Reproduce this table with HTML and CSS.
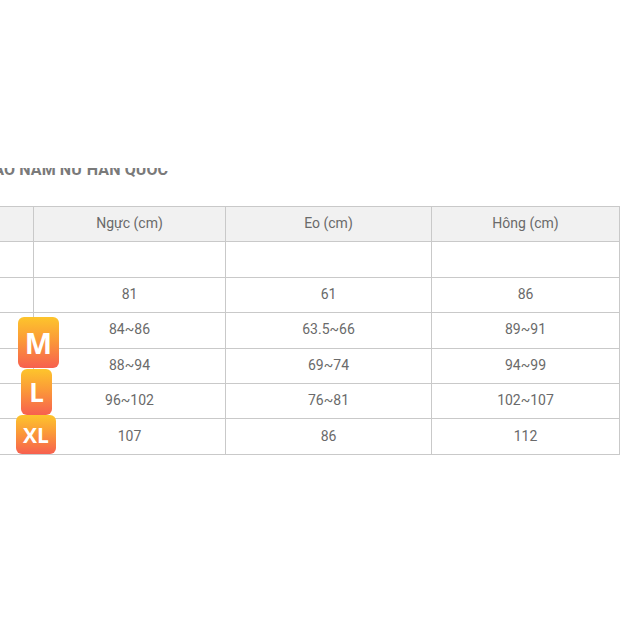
FILE: index.html
```html
<!DOCTYPE html>
<html lang="vi">
<head>
<meta charset="utf-8">
<link rel="stylesheet" href="styles.css">
</head>
<body>
<div class="page">
  <div class="title-clip"><div class="title">BẢNG SIZE ÁO NAM NỮ HÀN QUỐC</div></div>
  <div class="table-wrap">
    <table class="size-table">
      <tr class="head">
        <td class="c1">Size</td>
        <td class="c2">Ngực (cm)</td>
        <td class="c3">Eo (cm)</td>
        <td class="c4">Hông (cm)</td>
      </tr>
      <tr><td class="c1"></td><td></td><td></td><td></td></tr>
      <tr><td class="c1">XS</td><td>81</td><td>61</td><td>86</td></tr>
      <tr><td class="c1">S</td><td>84~86</td><td>63.5~66</td><td>89~91</td></tr>
      <tr><td class="c1">M</td><td>88~94</td><td>69~74</td><td>94~99</td></tr>
      <tr><td class="c1">L</td><td>96~102</td><td>76~81</td><td>102~107</td></tr>
      <tr><td class="c1">XL</td><td>107</td><td>86</td><td>112</td></tr>
    </table>
    <div class="badge badge-m">M</div>
    <div class="badge badge-l">L</div>
    <div class="badge badge-xl">XL</div>
  </div>
</div>
</body>
</html>
```

FILE: styles.css
```css
html, body {
  margin: 0;
  padding: 0;
  background: #ffffff;
}
.page {
  width: 634px;
  height: 634px;
  overflow: hidden;
  position: relative;
  font-family: Roboto, "Liberation Sans", sans-serif;
}
.title-clip {
  margin-top: 168px;
  height: 10px;
  overflow: hidden;
  margin-left: -92px;
}
.title {
  margin-top: -6px;
  font-size: 16px;
  line-height: 16px;
  font-weight: 700;
  color: #7a7a7a;
  white-space: nowrap;
  letter-spacing: 0.1px;
}
.table-wrap {
  position: relative;
  margin-top: 28px;
}
.size-table {
  border-collapse: collapse;
  margin-left: -160px;
  table-layout: fixed;
  width: 780px;
}
.size-table td {
  border: 1px solid #c9c9c9;
  height: 32.4px;
  padding: 0 0 2px 0;
  text-align: center;
  vertical-align: middle;
  font-size: 14px;
  color: #6a6a6a;
}
.size-table .c1 { width: 192px; }
.size-table .c2 { width: 191px; }
.size-table .c3 { width: 205px; }
.size-table .c4 { width: 187px; }
.size-table .head td {
  background: #f1f1f1;
}
.badge {
  position: absolute;
  display: flex;
  align-items: center;
  justify-content: center;
  color: #ffffff;
  font-family: "Open Sans", "Liberation Sans", sans-serif;
  font-weight: 700;
  border-radius: 6px;
  background: linear-gradient(180deg, #fdc52c 0%, #fb9a38 45%, #f7604f 100%);
}
.badge-m {
  left: 18px;
  top: 111px;
  width: 41px;
  height: 51px;
  font-size: 29px;
}
.badge-l {
  left: 21px;
  top: 163px;
  width: 31px;
  height: 46px;
  font-size: 26px;
}
.badge-xl {
  left: 16px;
  top: 209px;
  width: 40px;
  height: 39px;
  font-size: 21px;
}
```
